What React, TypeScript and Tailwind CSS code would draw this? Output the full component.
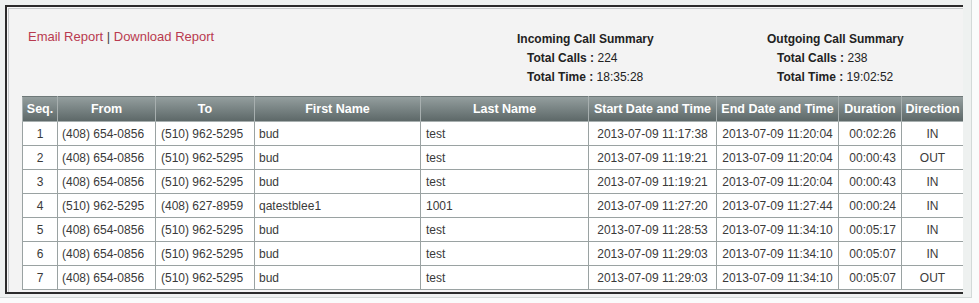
import React from "react"

const rows = [
  ["1", "(408) 654-0856", "(510) 962-5295", "bud", "test", "2013-07-09 11:17:38", "2013-07-09 11:20:04", "00:02:26", "IN"],
  ["2", "(408) 654-0856", "(510) 962-5295", "bud", "test", "2013-07-09 11:19:21", "2013-07-09 11:20:04", "00:00:43", "OUT"],
  ["3", "(408) 654-0856", "(510) 962-5295", "bud", "test", "2013-07-09 11:19:21", "2013-07-09 11:20:04", "00:00:43", "IN"],
  ["4", "(510) 962-5295", "(408) 627-8959", "qatestblee1", "1001", "2013-07-09 11:27:20", "2013-07-09 11:27:44", "00:00:24", "IN"],
  ["5", "(408) 654-0856", "(510) 962-5295", "bud", "test", "2013-07-09 11:28:53", "2013-07-09 11:34:10", "00:05:17", "IN"],
  ["6", "(408) 654-0856", "(510) 962-5295", "bud", "test", "2013-07-09 11:29:03", "2013-07-09 11:34:10", "00:05:07", "IN"],
  ["7", "(408) 654-0856", "(510) 962-5295", "bud", "test", "2013-07-09 11:29:03", "2013-07-09 11:34:10", "00:05:07", "OUT"],
]

const headers = [
  "Seq.",
  "From",
  "To",
  "First Name",
  "Last Name",
  "Start Date and Time",
  "End Date and Time",
  "Duration",
  "Direction",
]

// text alignment per column
const cellClass = [
  "text-center",
  "text-left pl-[4px]",
  "text-left pl-[5px]",
  "text-left pl-[4px]",
  "text-left pl-[5px]",
  "text-center",
  "text-center",
  "text-right pr-[5px]",
  "text-center",
]

function Summary({ title, calls, time }: { title: string; calls: string; time: string }) {
  return (
    <div className="leading-[19px] text-[12px] text-[#222]">
      <div className="font-bold">{title}</div>
      <div className="pl-[10px]">
        <span className="font-bold">Total Calls :</span> {calls}
      </div>
      <div className="pl-[10px]">
        <span className="font-bold">Total Time :</span> {time}
      </div>
    </div>
  )
}

export default function App() {
  return (
    <div
      className="w-[979px] h-[303px] bg-[#fafbfb] overflow-hidden"
      style={{ fontFamily: '"Liberation Sans", Arial, sans-serif' }}
    >
      <div className="w-[972px] h-[298px] bg-[#eef1f0] border-r border-b border-[#d3d9d8] pt-[5px] pl-[5px]">
        {/* Report frame */}
        <div className="w-[958px] h-[289px] border-t-2 border-l-2 border-b-2 border-[#2b2b2b] bg-[#f7f7f7] pt-px pl-px overflow-hidden">
          <div className="h-full border-t border-l border-[#c5c9c9] bg-[#f3f3f3] pl-[13px]">
            {/* Top area */}
            <div className="flex h-[87px]">
              <div className="w-[495px] pl-[6px] pt-[18px] text-[13px] leading-[19px]">
                <a className="text-[#b93a4f]">Email Report</a>
                <span className="text-[#444]"> | </span>
                <a className="text-[#b93a4f]">Download Report</a>
              </div>
              <div className="w-[250px] pt-[21px]">
                <Summary title="Incoming Call Summary" calls="224" time="18:35:28" />
              </div>
              <div className="pt-[21px]">
                <Summary title="Outgoing Call Summary" calls="238" time="19:02:52" />
              </div>
            </div>

            {/* Call table */}
            <table className="w-[941px] table-fixed border-collapse text-[12px]">
              <colgroup>
                <col className="w-[35px]" />
                <col className="w-[98px]" />
                <col className="w-[99px]" />
                <col className="w-[166px]" />
                <col className="w-[168px]" />
                <col className="w-[128px]" />
                <col className="w-[122px]" />
                <col className="w-[63px]" />
                <col className="w-[62px]" />
              </colgroup>
              <thead>
                <tr className="bg-gradient-to-b from-[#949e9e] via-[#778282] to-[#5b6666]">
                  {headers.map((h) => (
                    <th
                      key={h}
                      className="h-[25px] border border-[#a7afaf] border-t-[#6e7878] text-center text-[12.5px] font-bold text-white whitespace-nowrap p-0"
                    >
                      {h}
                    </th>
                  ))}
                </tr>
              </thead>
              <tbody>
                {rows.map((r) => (
                  <tr key={r[0]} className="bg-white">
                    {r.map((c, i) => (
                      <td
                        key={i}
                        className={`h-[24px] border border-[#9aa2a2] text-[#3a3a3a] whitespace-nowrap py-0 ${cellClass[i]}`}
                      >
                        {c}
                      </td>
                    ))}
                  </tr>
                ))}
              </tbody>
            </table>
          </div>
        </div>
      </div>
    </div>
  )
}
